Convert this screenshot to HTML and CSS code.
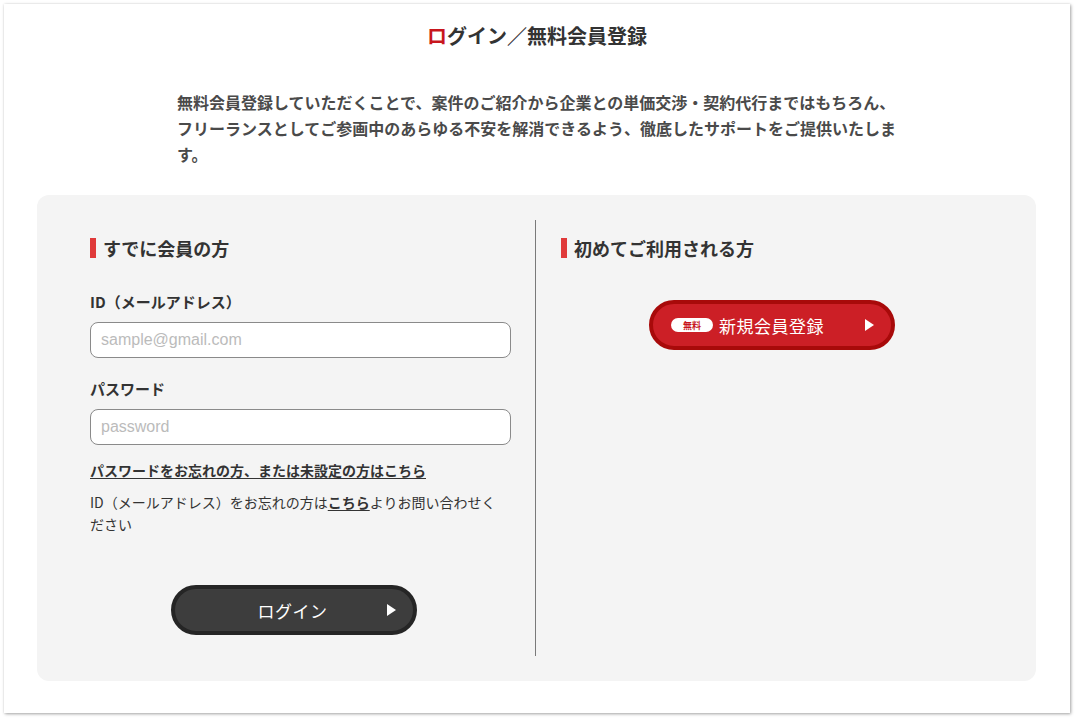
FILE: index.html
```html
<!DOCTYPE html>
<html lang="ja">
<head>
<meta charset="utf-8">
<title>ログイン／無料会員登録</title>
<link rel="stylesheet" href="styles.css">
</head>
<body>
<div class="card">
  <h1 class="title"><span class="red">ロ</span>グイン／無料会員登録</h1>
  <p class="lead">無料会員登録していただくことで、案件のご紹介から企業との単価交渉・契約代行まではもちろん、フリーランスとしてご参画中のあらゆる不安を解消できるよう、徹底したサポートをご提供いたします。</p>
  <div class="panel">
    <div class="col col-left">
      <h2 class="heading">すでに会員の方</h2>
      <label class="label">ID（メールアドレス）</label>
      <input class="field" type="text" placeholder="sample@gmail.com">
      <label class="label label-pw">パスワード</label>
      <input class="field" type="password" placeholder="password">
      <a class="forgot" href="#">パスワードをお忘れの方、または未設定の方はこちら</a>
      <p class="note">ID（メールアドレス）をお忘れの方は<a href="#">こちら</a>よりお問い合わせください</p>
      <div class="btn-row">
        <a class="btn btn-dark" href="#"><span class="btn-text">ログイン</span><span class="tri"></span></a>
      </div>
    </div>
    <div class="col col-right">
      <h2 class="heading">初めてご利用される方</h2>
      <div class="btn-row-r">
        <a class="btn btn-red" href="#"><span class="badge">無料</span><span class="btn-text-r">新規会員登録</span><span class="tri"></span></a>
      </div>
    </div>
  </div>
</div>
</body>
</html>
```

FILE: styles.css
```css
* { box-sizing: border-box; }
html, body { margin: 0; padding: 0; background: #fff; }
body {
  font-family: "Noto Sans CJK JP", "Noto Sans", sans-serif;
  color: #333;
  width: 1077px;
  height: 721px;
  overflow: hidden;
}
.card {
  margin: 4px 0 0 4px;
  width: 1066px;
  height: 709px;
  background: #fff;
  box-shadow: 1px 1px 3px rgba(0,0,0,0.35), 0 0 2px rgba(0,0,0,0.08);
  padding: 21px 0 0 33px;
}
.title {
  margin: 0;
  width: 1000px;
  text-align: center;
  font-size: 20px;
  line-height: 22px;
  font-weight: 700;
  color: #333;
}
.red { color: #c8161d; }
.lead {
  margin: 42px 0 0 140px;
  width: 726px;
  font-size: 16px;
  line-height: 26px;
  font-weight: 700;
  color: #4a4a4a;
}
.panel {
  margin: 28px 0 0 0;
  width: 999px;
  height: 486px;
  background: #f4f4f4;
  border-radius: 12px;
  padding: 25px 54px 25px 53px;
  display: grid;
  grid-template-columns: 446px 446px;
}
.col { display: flex; flex-direction: column; align-items: flex-start; }
.col-left { padding: 0 26px 0 0; border-right: 1px solid #7a7a7a; }
.col-right { padding: 0 0 0 25px; }
.heading {
  margin: 18px 0 0 0;
  font-size: 18px;
  line-height: 22px;
  font-weight: 700;
  color: #333;
  border-left: 6px solid #e03a3a;
  padding-left: 7px;
  height: 20px;
  display: flex;
  align-items: center;
}
.label {
  margin-top: 35px;
  font-size: 15px;
  line-height: 18px;
  font-weight: 700;
  color: #333;
}
.label-pw { margin-top: 22px; }
.field {
  margin-top: 11px;
  width: 421px;
  height: 36px;
  border: 1px solid #8a8a8a;
  border-radius: 8px;
  background: #fff;
  padding: 0 10px;
  font-family: "Liberation Sans", Arial, sans-serif;
  font-size: 16px;
  color: #333;
  outline: none;
}
.field::placeholder { color: #bbb; }
.forgot {
  margin-top: 16px;
  font-size: 14px;
  line-height: 18px;
  font-weight: 700;
  color: #333;
  text-decoration: underline;
  text-underline-offset: 2px;
}
.note {
  margin: 12px 0 0 0;
  width: 408px;
  font-size: 14px;
  line-height: 22px;
  color: #333;
}
.note a {
  color: #333;
  font-weight: 700;
  text-decoration: underline;
  text-underline-offset: 2px;
}
.btn-row { margin: 50px 0 0 81px; }
.btn {
  position: relative;
  display: flex;
  align-items: center;
  width: 246px;
  height: 50px;
  border-radius: 25px;
  text-decoration: none;
  color: #fff;
}
.btn-dark {
  background: #3d3d3d;
  border: 4px solid #252525;
  justify-content: center;
}
.btn-text {
  font-size: 17px;
  font-weight: 400;
  letter-spacing: 0.5px;
  margin-left: -3px;
}
.tri {
  position: absolute;
  right: 17px;
  top: 50%;
  margin-top: -6px;
  width: 0;
  height: 0;
  border-top: 6px solid transparent;
  border-bottom: 6px solid transparent;
  border-left: 9px solid #fff;
}
.btn-row-r { margin: 42px 0 0 88px; }
.btn-red {
  background: #cc1f26;
  border: 4px solid #a80a0a;
  padding-left: 18px;
}
.badge {
  display: inline-flex;
  align-items: center;
  justify-content: center;
  width: 42px;
  height: 14px;
  border-radius: 7px;
  background: #fff;
  color: #c8161d;
  font-size: 9px;
  font-weight: 700;
  line-height: 1;
}
.btn-text-r {
  margin-left: 6px;
  font-size: 17px;
  font-weight: 400;
  letter-spacing: 0.5px;
}
```
